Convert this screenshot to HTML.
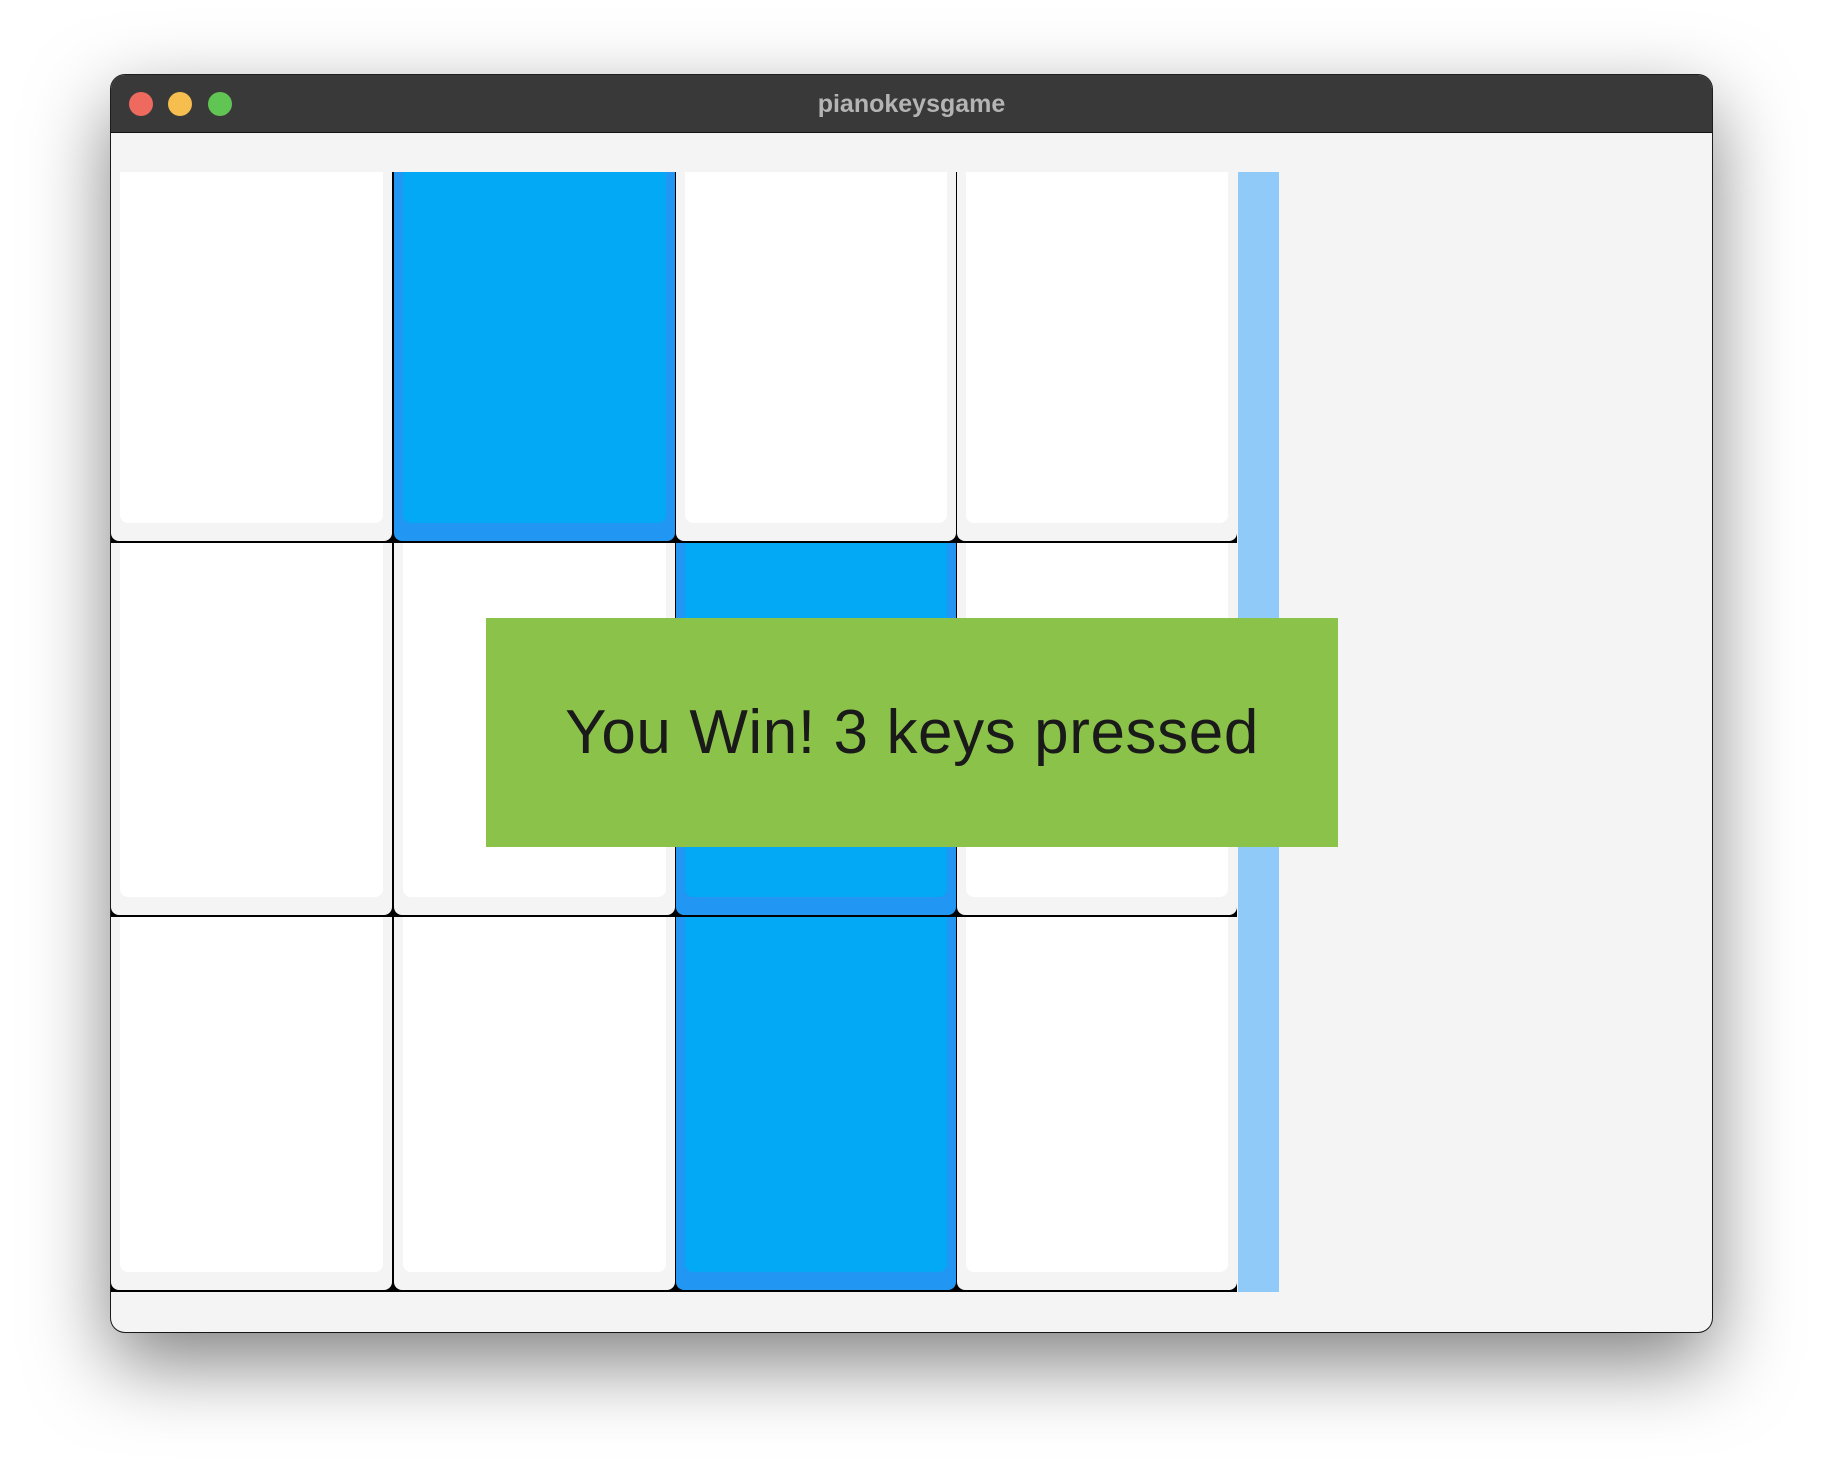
<!DOCTYPE html>
<html><head><meta charset="utf-8"><style>
body{margin:0;width:1824px;height:1480px;background:#fff;position:relative;overflow:hidden;font-family:"Liberation Sans",sans-serif}
.win{position:absolute;left:111px;top:75px;width:1601px;height:1257px;border-radius:14px;background:#f4f4f4;box-shadow:0 30px 80px rgba(0,0,0,.5),0 0 0 1px #222;overflow:hidden}
.tb{position:absolute;left:0;top:0;width:100%;height:57px;background:#393939;border-bottom:1px solid #111}
.tl{position:absolute;top:17px;width:24px;height:24px;border-radius:50%}
.title{position:absolute;left:0;right:0;top:15px;text-align:center;color:#b4b4b4;font-weight:bold;font-size:25px}
.grid{position:absolute;left:0;top:97px;width:1126px;height:1120px;background:#000}
.c{position:absolute;background:#f4f4f4;border-radius:0 0 8px 8px}
.c i{position:absolute;left:9px;right:9px;top:0;bottom:18px;background:#fff;border-radius:0 0 8px 8px}
.c.b{background:#2196f3}.c.b i{background:#03a9f4}
.strip{position:absolute;left:1127px;top:97px;width:41px;height:1120px;background:#90caf9}
.win2{position:absolute;left:375px;top:543px;width:852px;height:229px;background:#8bc34a;display:flex;align-items:center;justify-content:center;font-size:62px;letter-spacing:0.6px;color:#1a1a1a}
</style></head><body>
<div class="win">
<div class="tb"><div class="tl" style="left:18px;background:#ee6a5f"></div><div class="tl" style="left:57px;background:#f5be4f"></div><div class="tl" style="left:97px;background:#61c554"></div><div class="title">pianokeysgame</div></div>
<div class="grid">
<div class="c" style="left:0;top:0;width:281px;height:369px"><i></i></div>
<div class="c b" style="left:283px;top:0;width:281px;height:369px"><i></i></div>
<div class="c" style="left:565px;top:0;width:280px;height:369px"><i></i></div>
<div class="c" style="left:846px;top:0;width:280px;height:369px"><i></i></div>
<div class="c" style="left:0;top:371px;width:281px;height:372px"><i></i></div>
<div class="c" style="left:283px;top:371px;width:281px;height:372px"><i></i></div>
<div class="c b" style="left:565px;top:371px;width:280px;height:372px"><i></i></div>
<div class="c" style="left:846px;top:371px;width:280px;height:372px"><i></i></div>
<div class="c" style="left:0;top:745px;width:281px;height:373px"><i></i></div>
<div class="c" style="left:283px;top:745px;width:281px;height:373px"><i></i></div>
<div class="c b" style="left:565px;top:745px;width:280px;height:373px"><i></i></div>
<div class="c" style="left:846px;top:745px;width:280px;height:373px"><i></i></div>
</div>
<div class="strip"></div>
<div class="win2">You Win! 3 keys pressed</div>
</div>
</body></html>
